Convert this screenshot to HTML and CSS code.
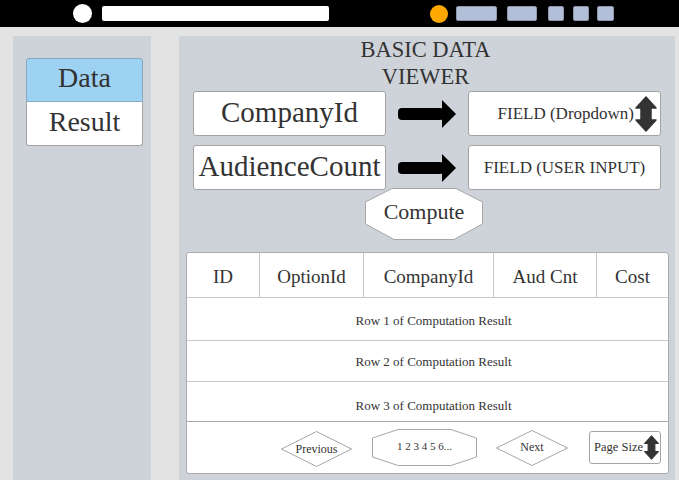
FILE: index.html
```html
<!DOCTYPE html>
<html lang="en">
<head>
<meta charset="utf-8">
<title>Basic Data Viewer</title>
<link rel="stylesheet" href="styles.css">
</head>
<body>
<header class="topbar">
  <div class="dot dot-white"></div>
  <div class="urlbar"></div>
  <div class="right-group">
    <div class="dot dot-orange"></div>
    <div class="tab tab-1"></div>
    <div class="tab tab-2"></div>
    <div class="tab tab-3"></div>
    <div class="tab tab-4"></div>
    <div class="tab tab-5"></div>
  </div>
</header>
<div class="workspace">
  <aside class="sidebar">
    <div class="nav-item nav-active">Data</div>
    <div class="nav-item nav-bottom">Result</div>
  </aside>
  <main class="panel">
    <h1 class="title">BASIC DATA<br>VIEWER</h1>
    <div class="form">
      <div class="label-box">CompanyId</div>
      <svg class="arrow" width="58" height="27" viewBox="0 0 58 27"><rect x="0" y="8" width="46" height="12" rx="4"/><polygon points="44,0 58,14 44,28"/></svg>
      <div class="field field-dropdown"><span>FIELD (Dropdown)</span><svg class="updown" width="22" height="36" viewBox="0 0 22 36"><path d="M11 1 L21 12 L16 12 L16 24 L21 24 L11 35 L1 24 L6 24 L6 12 L1 12 Z"/></svg></div>
      <div class="label-box">AudienceCount</div>
      <svg class="arrow" width="58" height="27" viewBox="0 0 58 27"><rect x="0" y="8" width="46" height="12" rx="4"/><polygon points="44,0 58,14 44,28"/></svg>
      <div class="field">FIELD (USER INPUT)</div>
    </div>
    <div class="shape-btn compute">
      <svg width="118" height="52" viewBox="0 0 118 52"><polygon points="27,0.5 91,0.5 117.5,14 117.5,36 89,51.5 29,51.5 0.5,36 0.5,14"/></svg>
      <span>Compute</span>
    </div>
    <div class="table">
      <div class="thead">
        <div class="th">ID</div>
        <div class="th">OptionId</div>
        <div class="th">CompanyId</div>
        <div class="th">Aud Cnt</div>
        <div class="th">Cost</div>
      </div>
      <div class="row row-1">Row 1 of Computation Result</div>
      <div class="row row-2">Row 2 of Computation Result</div>
      <div class="row row-3">Row 3 of Computation Result</div>
      <div class="pager">
        <div class="shape-btn prev">
          <svg width="71" height="36" viewBox="0 0 71 36"><polygon points="0.5,18 35.5,0.5 70.5,18 35.5,35.5"/></svg>
          <span>Previous</span>
        </div>
        <div class="shape-btn pages">
          <svg width="105" height="37" viewBox="0 0 105 37"><polygon points="0.5,9 26,0.5 79,0.5 104.5,9 104.5,28 79,36.5 26,36.5 0.5,28"/></svg>
          <span>1 2 3 4 5 6...</span>
        </div>
        <div class="shape-btn next">
          <svg width="72" height="36" viewBox="0 0 72 36"><polygon points="0.5,18 36,0.5 71.5,18 36,35.5"/></svg>
          <span>Next</span>
        </div>
        <div class="page-size">
          <span>Page Size</span>
          <svg class="updown-small" width="15" height="25" viewBox="0 0 22 36"><path d="M11 1 L21 12 L16 12 L16 24 L21 24 L11 35 L1 24 L6 24 L6 12 L1 12 Z"/></svg>
        </div>
      </div>
    </div>
  </main>
</div>
</body>
</html>
```
FILE: styles.css
```css
* { box-sizing: border-box; }

body {
  margin: 0;
  width: 679px;
  height: 480px;
  overflow: hidden;
  background: #e3e3e3;
  font-family: "Liberation Serif", "Times New Roman", serif;
  color: #333;
}

.topbar {
  height: 27px;
  background: #000;
  display: flex;
  align-items: center;
  padding-left: 73px;
}

.dot { border-radius: 50%; }
.dot-white { width: 19px; height: 19px; background: #fff; }
.dot-orange { width: 18px; height: 18px; background: #ffa800; }

.urlbar {
  width: 227px;
  height: 15px;
  margin-left: 10px;
  background: #fff;
  border-radius: 2px;
}

.right-group {
  display: flex;
  align-items: center;
  margin-left: 101px;
}

.tab {
  height: 15px;
  background: #b3bfd9;
  border: 1px solid #8e98ad;
  border-radius: 2px;
}
.tab-1 { width: 41px; margin-left: 8px; }
.tab-2 { width: 30px; margin-left: 10px; }
.tab-3 { width: 16px; margin-left: 11px; }
.tab-4 { width: 16px; margin-left: 9px; }
.tab-5 { width: 17px; margin-left: 8px; }

.workspace {
  display: flex;
  height: 453px;
  padding: 9px 0 0 13px;
}

.sidebar {
  width: 138px;
  background: #ced2d9;
  padding: 22px 0 0 13px;
}

.nav-item {
  width: 117px;
  height: 44px;
  display: flex;
  align-items: center;
  justify-content: center;
  font-size: 28px;
  background: #fff;
  border: 1px solid #a3a3a3;
  padding-bottom: 4px;
}
.nav-active {
  background: #9dd2f2;
  border-color: #88a9c0;
  border-radius: 3px 3px 0 0;
}
.nav-bottom {
  border-top: 0;
  border-radius: 0 0 3px 3px;
}

.panel {
  width: 496px;
  margin-left: 28px;
  background: #ced2d9;
  display: flex;
  flex-direction: column;
  align-items: flex-start;
}

.title {
  width: 100%;
  margin: 0;
  font-size: 22.5px;
  line-height: 27px;
  font-weight: normal;
  text-align: center;
  padding-right: 3px;
}

.form {
  display: grid;
  grid-template-columns: 193px 58px 193px;
  grid-auto-rows: 45px;
  column-gap: 12px;
  row-gap: 9px;
  align-items: center;
  margin: 1px 0 0 14px;
}

.label-box,
.field {
  height: 45px;
  background: #fff;
  border: 1px solid #a3a3a3;
  border-radius: 3px;
  display: flex;
  align-items: center;
  justify-content: center;
}

.label-box {
  font-size: 29px;
  padding-bottom: 3px;
}

.field {
  font-size: 17px;
}

.field-dropdown {
  justify-content: flex-end;
  padding-right: 3px;
}
.field-dropdown span { margin-right: 1px; }

.arrow { fill: #000; display: block; overflow: visible; }
.updown, .updown-small { fill: #333; stroke: #333; stroke-linejoin: round; stroke-width: 1.5; display: block; }

.shape-btn {
  display: grid;
  place-items: center;
}
.shape-btn > * { grid-area: 1 / 1; }
.shape-btn svg { display: block; }
.shape-btn polygon { fill: #fff; stroke: #a6a6a6; stroke-width: 1; }

.compute {
  margin: -2px 0 0 186px;
  font-size: 22px;
}
.compute span { padding-bottom: 5px; }

.table {
  width: 483px;
  margin: 12px 0 0 7px;
  background: #fff;
  border: 1px solid #acacac;
  border-radius: 3px;
}

.thead {
  display: grid;
  grid-template-columns: 72px 104px 130px 103px 72px;
  height: 45px;
  border-bottom: 1px solid #c8c8c8;
}

.th {
  display: flex;
  align-items: center;
  justify-content: center;
  font-size: 19px;
  padding-top: 4px;
  border-left: 1px solid #c8c8c8;
}
.th:first-child { border-left: 0; }

.row {
  display: flex;
  align-items: center;
  justify-content: center;
  font-size: 13px;
  padding-left: 12px;
  border-bottom: 1px solid #c8c8c8;
}
.row-1 { height: 43px; padding-top: 4px; }
.row-2 { height: 41px; padding-top: 2px; }
.row-3 { height: 40px; padding-top: 8px; border-bottom-color: #a8a8a8; }

.pager {
  height: 51px;
  display: flex;
  align-items: center;
  justify-content: flex-end;
  padding: 0 7px 0 0;
}

.prev { font-size: 12px; margin-top: 2px; }
.prev span { padding-top: 2px; }
.pages { font-size: 11px; margin-left: 20px; }
.pages span { padding-bottom: 4px; }
.next { font-size: 12px; margin-left: 19px; }

.page-size {
  width: 72px;
  height: 33px;
  margin-left: 21px;
  border: 1px solid #a6a6a6;
  border-radius: 3px;
  display: flex;
  align-items: center;
  justify-content: flex-end;
  padding-right: 1px;
  font-size: 12.5px;
  gap: 1px;
}
```
